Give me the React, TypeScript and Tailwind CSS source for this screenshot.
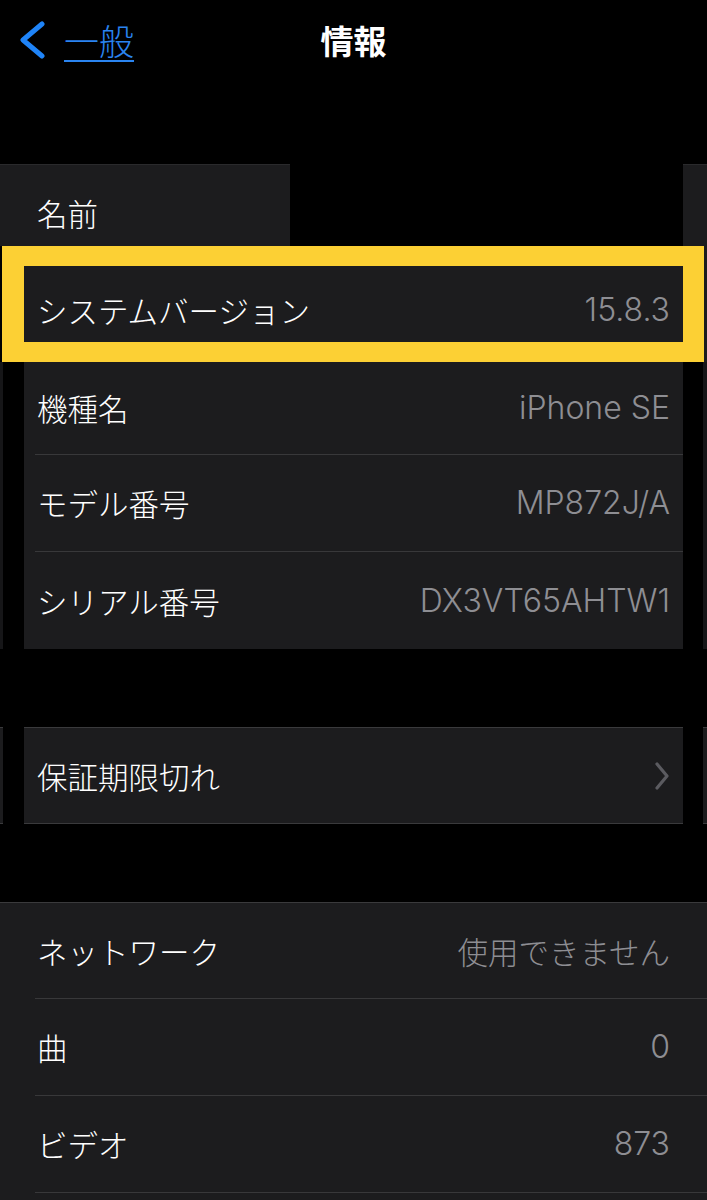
import React from 'react';

const jp = { fontFamily: '"Noto Sans CJK JP", "Noto Sans", sans-serif' };
const val = { fontFamily: 'Inter, "Noto Sans CJK JP", sans-serif' };

const Label = ({ children }: { children: React.ReactNode }) => (
  <span className="text-[30.5px] leading-[36px] font-light text-white" style={jp}>
    {children}
  </span>
);

const Value = ({ children, ja }: { children: React.ReactNode; ja?: boolean }) => (
  <span
    className={`${ja ? 'text-[30.5px]' : 'text-[32px]'} leading-[36px] font-light text-[#8e8e93]`}
    style={ja ? jp : val}
  >
    {children}
  </span>
);

// rows inside the inset (cropped) group
const InsetRow = ({ label, value, h, last }: { label: string; value: string; h: string; last?: boolean }) => (
  <div className={`pl-[11px] ${h}`}>
    <div className={`h-full flex items-center justify-between pl-[2px] pr-[13px] ${last ? '' : 'border-b border-[#38383a]'}`}>
      <Label>{label}</Label>
      <Value>{value}</Value>
    </div>
  </div>
);

const FullRow = ({ label, value, h, ja }: { label: string; value: string; h: string; ja?: boolean }) => (
  <div className={`pl-[35px] ${h}`}>
    <div className="h-full flex items-center justify-between pl-[2px] pr-[37px] border-b border-[#38383a]">
      <Label>{label}</Label>
      <Value ja={ja}>{value}</Value>
    </div>
  </div>
);

export default function App() {
  return (
    <div className="w-[707px] h-[1200px] bg-black overflow-hidden flex flex-col">
      {/* nav bar */}
      <div className="h-[80px] grid grid-cols-3 items-center shrink-0">
        <div className="flex items-center pl-[18px] gap-[18px]">
          <svg width="28" height="38" viewBox="0 0 28 38" fill="none">
            <polyline points="24,3 5,19 24,35" stroke="#1f84f8" strokeWidth="5" strokeLinecap="round" strokeLinejoin="round" />
          </svg>
          <span
            className="text-[35px] leading-[40px] font-light text-[#2a84f0] underline decoration-[#2a84f0] decoration-2 underline-offset-[5px]"
            style={jp}
          >
            一般
          </span>
        </div>
        <div className="flex justify-center">
          <span className="text-[33px] leading-[40px] font-bold text-white" style={jp}>
            情報
          </span>
        </div>
        <div />
      </div>

      <div className="h-[84px] shrink-0" />

      {/* name row (partly cut) */}
      <div className="h-[82px] flex shrink-0">
        <div className="w-[290px] bg-[#1c1c1e] border-t border-[#2a2a2c] pl-[37px] pt-[30px]">
          <Label>名前</Label>
        </div>
        <div className="flex-1" />
        <div className="w-[24px] bg-[#1c1c1e] border-t border-[#2a2a2c]" />
      </div>

      {/* highlighted system version */}
      <div className="h-[116px] flex shrink-0 pl-[2px]">
        <div className="flex-1 bg-[#fcd034] pt-[20px] pb-[20px] pl-[22px] pr-[21px]">
          <div className="h-full bg-[#1c1c1e] flex items-start justify-between pl-[13px] pr-[13px] pt-[26px]">
            <Label>システムバージョン</Label>
            <Value>15.8.3</Value>
          </div>
        </div>
        <div className="w-[3px] bg-[#1c1c1e]" />
      </div>

      {/* device info */}
      <div className="h-[287px] flex shrink-0">
        <div className="w-[3px] bg-[#161618]" />
        <div className="w-[21px]" />
        <div className="flex-1 bg-[#1c1c1e] flex flex-col">
          <InsetRow label="機種名" value="iPhone SE" h="h-[93px]" />
          <InsetRow label="モデル番号" value="MP872J/A" h="h-[97px]" />
          <InsetRow label="シリアル番号" value="DX3VT65AHTW1" h="h-[97px]" last />
        </div>
        <div className="w-[20px]" />
        <div className="w-[4px] bg-[#161618]" />
      </div>

      <div className="h-[78px] shrink-0" />

      {/* warranty */}
      <div className="h-[97px] flex shrink-0">
        <div className="w-[3px] bg-[#1c1c1e] border-y border-[#3a3a3c]" />
        <div className="w-[21px]" />
        <div className="flex-1 bg-[#1c1c1e] border-y border-[#3a3a3c] flex items-center justify-between pl-[13px] pr-[13px]">
          <Label>保証期限切れ</Label>
          <svg width="16" height="30" viewBox="0 0 16 30" fill="none">
            <polyline points="3,3 13,15 3,27" stroke="#5b5b60" strokeWidth="3.2" strokeLinecap="round" strokeLinejoin="round" />
          </svg>
        </div>
        <div className="w-[20px]" />
        <div className="w-[4px] bg-[#1c1c1e] border-y border-[#3a3a3c]" />
      </div>

      <div className="h-[78px] shrink-0" />

      {/* media */}
      <div className="flex-1 bg-[#1c1c1e] border-t border-[#3a3a3c] flex flex-col">
        <FullRow label="ネットワーク" value="使用できません" h="h-[96px]" ja />
        <FullRow label="曲" value="0" h="h-[97px]" />
        <FullRow label="ビデオ" value="873" h="h-[97px]" />
      </div>
    </div>
  );
}
